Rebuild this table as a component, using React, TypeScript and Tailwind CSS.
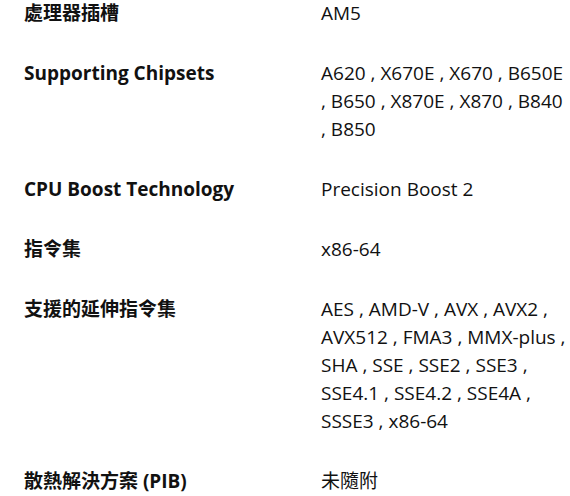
const specs: { label: string; value: string }[] = [
  { label: '處理器插槽', value: 'AM5' },
  { label: 'Supporting Chipsets', value: 'A620 , X670E , X670 , B650E , B650 , X870E , X870 , B840 , B850' },
  { label: 'CPU Boost Technology', value: 'Precision Boost 2' },
  { label: '指令集', value: 'x86-64' },
  {
    label: '支援的延伸指令集',
    value: 'AES , AMD-V , AVX , AVX2 , AVX512 , FMA3 , MMX-plus , SHA , SSE , SSE2 , SSE3 , SSE4.1 , SSE4.2 , SSE4A , SSSE3 , x86-64',
  },
  { label: '散熱解決方案 (PIB)', value: '未隨附' },
];

export default function App() {
  return (
    <div
      className="w-[570px] h-[496px] overflow-hidden bg-white text-[#111] text-[19px] leading-[28px]"
      style={{ fontFamily: '"Open Sans", "Noto Sans CJK TC", sans-serif' }}
    >
      <div className="-mt-[17px] pl-6">
        {specs.map((row) => (
          <div key={row.label} className="grid grid-cols-[297px_1fr] py-4">
            <div className="font-bold">{row.label}</div>
            <div className="pr-1">{row.value}</div>
          </div>
        ))}
      </div>
    </div>
  );
}
